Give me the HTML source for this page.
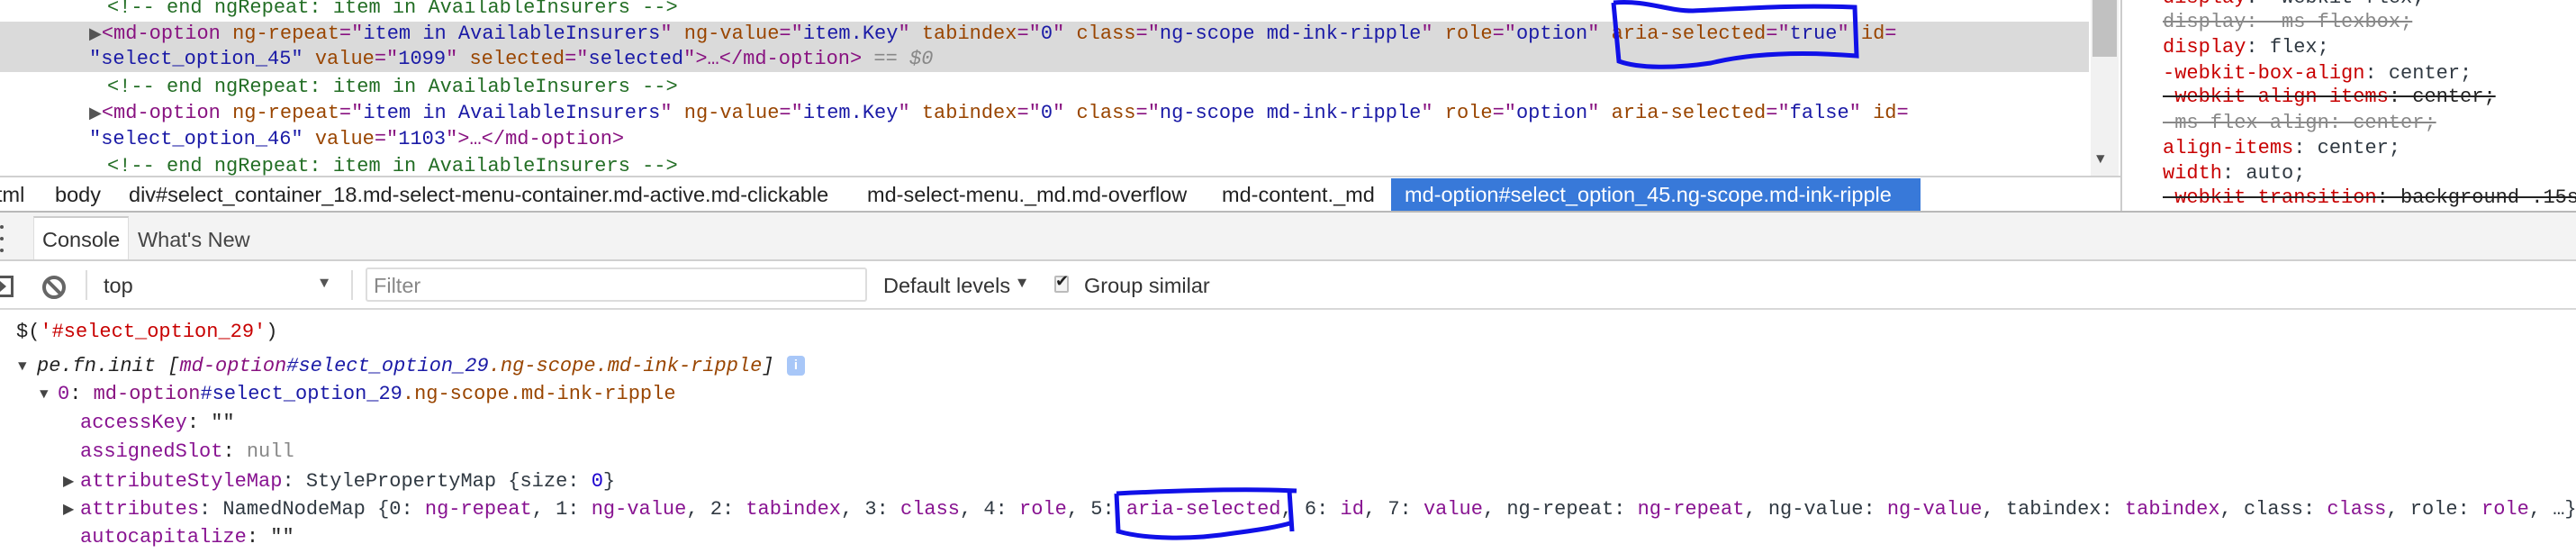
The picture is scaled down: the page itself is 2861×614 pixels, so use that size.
<!DOCTYPE html>
<html><head><meta charset="utf-8"><style>
*{margin:0;padding:0;box-sizing:border-box}
body{width:2861px;height:614px;overflow:hidden;background:#fff;position:relative;font-family:"Liberation Mono",monospace;font-size:22px;color:#303942}
.a{position:absolute;white-space:pre;line-height:28px}
.s{font-family:"Liberation Sans",sans-serif;font-size:23.5px!important}
.tg{color:#881280}.an{color:#994500}.av{color:#1a1aa6}.cm{color:#236e25}.eq{color:#881280}
.pp{color:#881391}.st{color:#c80000}.nm{color:#1c00cf}.gr{color:#888}
.rd{color:#c80000}.strike{text-decoration:line-through}
</style></head><body>
<div style="position:absolute;left:0;top:24px;width:2320px;height:56px;background:#dadada"></div>
<div class="a cm" style="left:119px;top:-5px">&lt;!-- end ngRepeat: item in AvailableInsurers --&gt;</div>
<div class="a" style="left:99px;top:24px"><span style="color:#555;font-size:18px">▶</span><span class="tg">&lt;md-option</span> <span class="an">ng-repeat</span><span class="eq">="</span><span class="av">item in AvailableInsurers</span><span class="eq">"</span> <span class="an">ng-value</span><span class="eq">="</span><span class="av">item.Key</span><span class="eq">"</span> <span class="an">tabindex</span><span class="eq">="</span><span class="av">0</span><span class="eq">"</span> <span class="an">class</span><span class="eq">="</span><span class="av">ng-scope md-ink-ripple</span><span class="eq">"</span> <span class="an">role</span><span class="eq">="</span><span class="av">option</span><span class="eq">"</span> <span class="an">aria-selected</span><span class="eq">="</span><span class="av">true</span><span class="eq">"</span> <span class="an">id</span><span class="eq">=</span></div>
<div class="a" style="left:99px;top:52px"><span class="av">"select_option_45"</span> <span class="an">value</span><span class="eq">="</span><span class="av">1099</span><span class="eq">"</span> <span class="an">selected</span><span class="eq">="</span><span class="av">selected</span><span class="eq">"</span><span class="tg">&gt;…&lt;/md-option&gt;</span> <span class="gr">== <i>$0</i></span></div>
<div class="a cm" style="left:119px;top:83px">&lt;!-- end ngRepeat: item in AvailableInsurers --&gt;</div>
<div class="a" style="left:99px;top:112px"><span style="color:#555;font-size:18px">▶</span><span class="tg">&lt;md-option</span> <span class="an">ng-repeat</span><span class="eq">="</span><span class="av">item in AvailableInsurers</span><span class="eq">"</span> <span class="an">ng-value</span><span class="eq">="</span><span class="av">item.Key</span><span class="eq">"</span> <span class="an">tabindex</span><span class="eq">="</span><span class="av">0</span><span class="eq">"</span> <span class="an">class</span><span class="eq">="</span><span class="av">ng-scope md-ink-ripple</span><span class="eq">"</span> <span class="an">role</span><span class="eq">="</span><span class="av">option</span><span class="eq">"</span> <span class="an">aria-selected</span><span class="eq">="</span><span class="av">false</span><span class="eq">"</span> <span class="an">id</span><span class="eq">=</span></div>
<div class="a" style="left:99px;top:141px"><span class="av">"select_option_46"</span> <span class="an">value</span><span class="eq">="</span><span class="av">1103</span><span class="eq">"</span><span class="tg">&gt;…&lt;/md-option&gt;</span></div>
<div class="a cm" style="left:119px;top:171px">&lt;!-- end ngRepeat: item in AvailableInsurers --&gt;</div>
<div style="position:absolute;left:2322px;top:0;width:31px;height:196px;background:#f1f1f1"></div>
<div style="position:absolute;left:2324px;top:0;width:27px;height:63px;background:#c1c1c1"></div>
<div class="a" style="left:2328px;top:163px;font-size:16px;color:#505050">▼</div>
<div style="position:absolute;left:2355px;top:0;width:2px;height:235px;background:#ccc"></div>
<div class="a" style="left:2402px;top:-16px"><span class="rd">display</span>: -webkit-flex;</div>
<div class="a strike" style="left:2402px;top:11px;color:#888">display: -ms-flexbox;</div>
<div class="a" style="left:2402px;top:39px"><span class="rd">display</span>: flex;</div>
<div class="a" style="left:2402px;top:68px"><span class="rd">-webkit-box-align</span>: center;</div>
<div class="a strike" style="left:2402px;top:94px;color:#222"><span class="rd">-webkit-align-items</span>: center;</div>
<div class="a strike" style="left:2402px;top:123px;color:#888">-ms-flex-align: center;</div>
<div class="a" style="left:2402px;top:151px"><span class="rd">align-items</span>: center;</div>
<div class="a" style="left:2402px;top:179px"><span class="rd">width</span>: auto;</div>
<div class="a strike" style="left:2402px;top:206px;color:#222"><span class="rd">-webkit-transition</span>: background .15s</div>
<div style="position:absolute;left:0;top:195px;width:2355px;height:2px;background:#d0d0d0"></div>
<div style="position:absolute;left:1545px;top:198px;width:588px;height:36px;background:#3879d9"></div>
<div class="a s" style="left:-4px;top:202px;color:#222">tml</div>
<div class="a s" style="left:61px;top:202px;color:#222">body</div>
<div class="a s" style="left:143px;top:202px;color:#222">div#select_container_18.md-select-menu-container.md-active.md-clickable</div>
<div class="a s" style="left:963px;top:202px;color:#222">md-select-menu._md.md-overflow</div>
<div class="a s" style="left:1357px;top:202px;color:#222">md-content._md</div>
<div class="a s" style="left:1560px;top:202px;color:#fff">md-option#select_option_45.ng-scope.md-ink-ripple</div>
<div style="position:absolute;left:0;top:234px;width:2861px;height:2px;background:#b8b8b8"></div>
<div style="position:absolute;left:0;top:236px;width:2861px;height:52px;background:#f3f3f3"></div>
<div style="position:absolute;left:0;top:288px;width:2861px;height:2px;background:#d0d0d0"></div>
<div style="position:absolute;left:37px;top:240px;width:106px;height:48px;background:#fff;border-top:2px solid #ccc;border-left:1px solid #ddd;border-right:1px solid #ddd"></div>
<div style="position:absolute;left:0;top:250px;width:4px;height:4px;background:#555;border-radius:2px"></div>
<div style="position:absolute;left:0;top:263px;width:4px;height:4px;background:#555;border-radius:2px"></div>
<div style="position:absolute;left:0;top:276px;width:4px;height:4px;background:#555;border-radius:2px"></div>
<div class="a s" style="left:47px;top:252px;color:#333">Console</div>
<div class="a s" style="left:153px;top:252px;color:#444">What's New</div>
<div style="position:absolute;left:-4px;top:306px;width:19px;height:24px;border:3px solid #555"></div>
<div style="position:absolute;left:0;top:312px;width:0;height:0;border-left:7px solid #555;border-top:6px solid transparent;border-bottom:6px solid transparent"></div>
<svg style="position:absolute;left:46px;top:305px" width="28" height="28"><circle cx="14" cy="14" r="11" fill="none" stroke="#666" stroke-width="4"/><line x1="6" y1="6" x2="22" y2="22" stroke="#666" stroke-width="4"/></svg>
<div style="position:absolute;left:95px;top:300px;width:2px;height:33px;background:#ddd"></div>
<div class="a s" style="left:115px;top:303px;color:#333">top</div>
<div class="a" style="left:355px;top:302px;color:#555;font-size:17px">▼</div>
<div style="position:absolute;left:390px;top:300px;width:2px;height:33px;background:#ddd"></div>
<div style="position:absolute;left:406px;top:297px;width:557px;height:38px;border:2px solid #ddd;border-radius:3px;background:#fff"></div>
<div class="a s" style="left:415px;top:303px;color:#888">Filter</div>
<div class="a s" style="left:981px;top:303px;color:#333">Default levels</div>
<div class="a" style="left:1130px;top:302px;color:#444;font-size:17px">▼</div>
<div style="position:absolute;left:1171px;top:306px;width:16px;height:19px;border:2px solid #bbb;border-radius:2px;background:#f5f5f5"></div>
<div class="a" style="left:1172px;top:300px;color:#222;font-size:18px">✔</div>
<div class="a s" style="left:1204px;top:303px;color:#333">Group similar</div>
<div style="position:absolute;left:0;top:342px;width:2861px;height:2px;background:#d8d8d8"></div>
<div class="a" style="left:-8px;top:355px;color:#aaa;font-size:16px">›</div>
<div class="a" style="left:18px;top:355px;color:#222">$(<span class="st">'#select_option_29'</span>)</div>
<div class="a" style="left:20px;top:393px;color:#444;font-size:16px">▼</div>
<div class="a" style="left:41px;top:393px;color:#222;font-style:italic">pe.fn.init [<span class="tg">md-option</span><span class="av">#select_option_29</span><span class="an">.ng-scope.md-ink-ripple</span>]</div>
<div style="position:absolute;left:874px;top:395px;width:20px;height:22px;background:#a8c7f8;border-radius:4px;color:#fff;font:bold 15px 'Liberation Sans',sans-serif;text-align:center;line-height:22px">i</div>
<div class="a" style="left:44px;top:424px;color:#444;font-size:16px">▼</div>
<div class="a" style="left:64px;top:424px;color:#222"><span class="pp">0</span>: <span class="tg">md-option</span><span class="av">#select_option_29</span><span class="an">.ng-scope.md-ink-ripple</span></div>
<div class="a" style="left:89px;top:456px;color:#222"><span class="pp">accessKey</span>: ""</div>
<div class="a" style="left:89px;top:488px;color:#222"><span class="pp">assignedSlot</span>: <span class="gr">null</span></div>
<div class="a" style="left:70px;top:521px;color:#444;font-size:16px">▶</div>
<div class="a" style="left:89px;top:521px;color:#303942"><span class="pp">attributeStyleMap</span>: StylePropertyMap {size: <span class="nm">0</span>}</div>
<div class="a" style="left:70px;top:552px;color:#444;font-size:16px">▶</div>
<div class="a" style="left:89px;top:552px;color:#303942"><span class="pp">attributes</span>: NamedNodeMap {0: <span class="pp">ng-repeat</span>, 1: <span class="pp">ng-value</span>, 2: <span class="pp">tabindex</span>, 3: <span class="pp">class</span>, 4: <span class="pp">role</span>, 5: <span class="pp">aria-selected</span>, 6: <span class="pp">id</span>, 7: <span class="pp">value</span>, ng-repeat: <span class="pp">ng-repeat</span>, ng-value: <span class="pp">ng-value</span>, tabindex: <span class="pp">tabindex</span>, class: <span class="pp">class</span>, role: <span class="pp">role</span>, …}</div>
<div class="a" style="left:89px;top:583px;color:#222"><span class="pp">autocapitalize</span>: ""</div>
<svg style="position:absolute;left:0;top:0" width="2861" height="614">
<path d="M1792 3 C1830 0 1850 12 1880 12 C1930 10 1990 5 2060 8 L2062 62 C2010 58 1950 58 1900 70 C1860 76 1820 76 1798 68 L1792 3" fill="none" stroke="#1010e8" stroke-width="5"/>
<path d="M1240 548 C1300 545 1380 542 1440 545 M1240 548 L1242 590 C1270 598 1320 600 1370 592 C1400 588 1420 585 1436 580 M1432 545 L1435 590" fill="none" stroke="#1010e8" stroke-width="5"/>
</svg>
</body></html>
